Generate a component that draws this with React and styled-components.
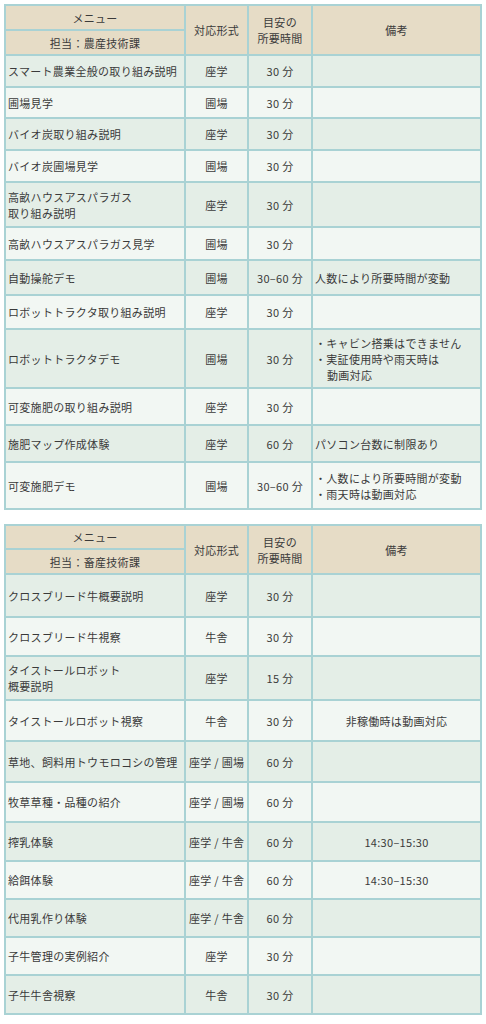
import React from "react";
import styled, { createGlobalStyle } from "styled-components";

const GlobalStyle = createGlobalStyle`
  body { margin: 0; background: #fff; }
  * { box-sizing: border-box; }
`;

const Page = styled.div`
  padding: 4px 4px 10px;
  display: flex;
  flex-direction: column;
  gap: 14px;
  font-family: "Noto Sans CJK JP", "Noto Sans", sans-serif;
  color: #3a3a3a;
`;

const Table = styled.table`
  width: 100%;
  table-layout: fixed;
  border-collapse: collapse;
  border: 2px solid #a9d2d4;
  font-size: 11px;
  letter-spacing: 0.3px;
  line-height: 16px;
`;

const Head = styled.th`
  background: #e6dcc6;
  border: 2px solid #a9d2d4;
  font-weight: normal;
  text-align: center;
  vertical-align: middle;
  padding: 0 4px;
  height: ${(p) => p.h || 24}px;
`;

const Row = styled.tr`
  background: ${(p) => (p.odd ? "#e4eee7" : "#f2f7f3")};
  height: ${(p) => p.h}px;
`;

const Cell = styled.td`
  border: 2px solid #a9d2d4;
  vertical-align: middle;
  padding: 0 ${(p) => (p.left ? "2px" : "3px")};
  text-align: ${(p) => (p.left ? "left" : "center")};
  white-space: nowrap;
`;

const Notes = styled.ul`
  list-style: none;
  margin: 0;
  padding: 0;
  text-align: left;
`;

const Note = styled.li`
  padding-left: 12px;
  text-indent: -12px;
  line-height: 16px;
`;

const table1 = [
  { name: "スマート農業全般の取り組み説明", type: "座学", time: "30 分", h: 32 },
  { name: "圃場見学", type: "圃場", time: "30 分", h: 31 },
  { name: "バイオ炭取り組み説明", type: "座学", time: "30 分", h: 32 },
  { name: "バイオ炭圃場見学", type: "圃場", time: "30 分", h: 32 },
  { name: ["高畝ハウスアスパラガス", "取り組み説明"], type: "座学", time: "30 分", h: 45 },
  { name: "高畝ハウスアスパラガス見学", type: "圃場", time: "30 分", h: 33 },
  { name: "自動操舵デモ", type: "圃場", time: "30–60 分", note: "人数により所要時間が変動", h: 35 },
  { name: "ロボットトラクタ取り組み説明", type: "座学", time: "30 分", h: 34 },
  { name: "ロボットトラクタデモ", type: "圃場", time: "30 分", notes: [["・キャビン搭乗はできません"], ["・実証使用時や雨天時は", "動画対応"]], h: 59 },
  { name: "可変施肥の取り組み説明", type: "座学", time: "30 分", h: 37 },
  { name: "施肥マップ作成体験", type: "座学", time: "60 分", note: "パソコン台数に制限あり", h: 37 },
  { name: "可変施肥デモ", type: "圃場", time: "30–60 分", notes: [["・人数により所要時間が変動"], ["・雨天時は動画対応"]], h: 47 },
];

const table2 = [
  { name: "クロスブリード牛概要説明", type: "座学", time: "30 分", h: 43 },
  { name: "クロスブリード牛視察", type: "牛舎", time: "30 分", h: 39 },
  { name: ["タイストールロボット", "概要説明"], type: "座学", time: "15 分", h: 44 },
  { name: "タイストールロボット視察", type: "牛舎", time: "30 分", note: "非稼働時は動画対応", center: true, h: 41 },
  { name: "草地、飼料用トウモロコシの管理", type: "座学 / 圃場", time: "60 分", h: 41 },
  { name: "牧草草種・品種の紹介", type: "座学 / 圃場", time: "60 分", h: 40 },
  { name: "搾乳体験", type: "座学 / 牛舎", time: "60 分", note: "14:30–15:30", center: true, h: 39 },
  { name: "給餌体験", type: "座学 / 牛舎", time: "60 分", note: "14:30–15:30", center: true, h: 38 },
  { name: "代用乳作り体験", type: "座学 / 牛舎", time: "60 分", h: 38 },
  { name: "子牛管理の実例紹介", type: "座学", time: "30 分", h: 38 },
  { name: "子牛牛舎視察", type: "牛舎", time: "30 分", h: 39 },
];

const Lines = ({ lines }) =>
  lines.map((l, i) => (
    <React.Fragment key={i}>
      {i > 0 && <br />}
      {l}
    </React.Fragment>
  ));

const MenuTable = ({ section, rows, headTop }) => (
  <Table>
    <colgroup>
      <col style={{ width: 180 }} />
      <col style={{ width: 63 }} />
      <col style={{ width: 64 }} />
      <col />
    </colgroup>
    <thead>
      <tr>
        <Head h={headTop}>メニュー</Head>
        <Head rowSpan={2}>対応形式</Head>
        <Head rowSpan={2}>目安の<br />所要時間</Head>
        <Head rowSpan={2}>備考</Head>
      </tr>
      <tr>
        <Head h={25}>担当：{section}</Head>
      </tr>
    </thead>
    <tbody>
      {rows.map((r, i) => (
        <Row key={i} odd={i % 2 === 0} h={r.h}>
          <Cell left>
            {Array.isArray(r.name) ? <Lines lines={r.name} /> : r.name}
          </Cell>
          <Cell>{r.type}</Cell>
          <Cell>{r.time}</Cell>
          <Cell left={!r.center}>
            {r.notes ? (
              <Notes>
                {r.notes.map((n, j) => (
                  <Note key={j}><Lines lines={n} /></Note>
                ))}
              </Notes>
            ) : r.note}
          </Cell>
        </Row>
      ))}
    </tbody>
  </Table>
);

export default function App() {
  return (
    <>
      <GlobalStyle />
      <Page>
        <MenuTable section="農産技術課" rows={table1} headTop={25} />
        <MenuTable section="畜産技術課" rows={table2} headTop={24} />
      </Page>
    </>
  );
}
